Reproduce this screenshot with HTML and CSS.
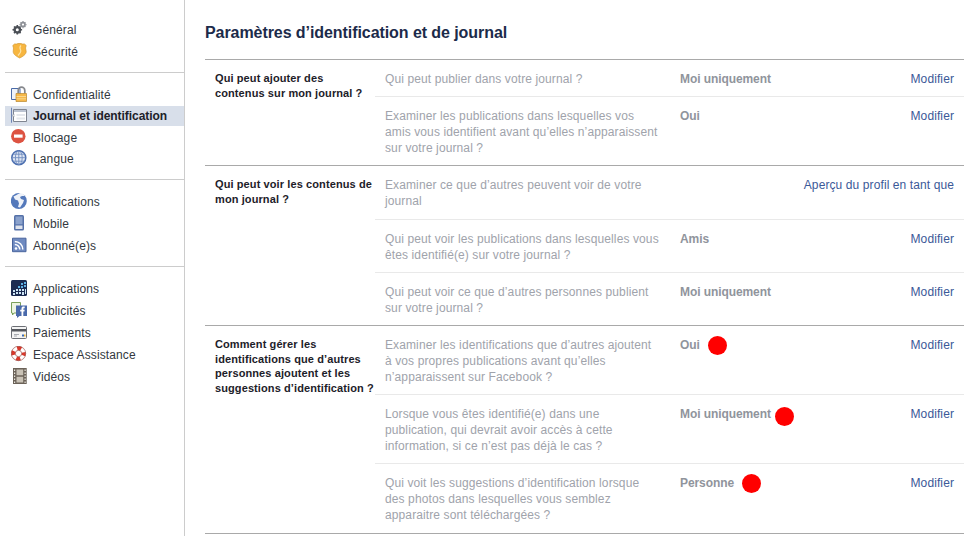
FILE: index.html
```html
<!DOCTYPE html>
<html lang="fr">
<head>
    <meta charset="UTF-8">
    <meta name="viewport" content="width=device-width, initial-scale=1.0">
    <title>Paramètres d’identification et de journal</title>
    <link rel="stylesheet" href="styles.css">
</head>
<body>
    <div class="sidebar">
        <ul class="nav-group first wide">
            <li><svg class="icon" viewBox="0 0 16 18"><circle cx="6.300" cy="8.800" r="2.700" fill="none" stroke="#4b4f56" stroke-width="2.400"/><path d="M6.300 4v1.500M6.300 12v1.500M1.500 8.800H3M9.600 8.800h1.500M3 5.500l1 1M8.600 11.100l1 1M3 12.100l1-1M8.600 6.500l1-1" stroke="#4b4f56" stroke-width="1.600"/><circle cx="12" cy="3.600" r="2" fill="none" stroke="#8d9096" stroke-width="1.700"/><path d="M12 0v1M12 6.200v1M8.500 3.600h1M14.500 3.600h1M9.600 1.200l.7.700M13.700 5.300l.7.700M9.600 6l.7-.7M13.700 1.900l.7-.7" stroke="#8d9096" stroke-width="1.200"/></svg>Général</li>
            <li><svg class="icon" viewBox="0 0 16 18"><path d="M3.500 1h2.300L7 .5h3l1.200.5h2.300l1.700 1.500-.7 2.500.7 3.500c0 3-3.500 5-6.500 6.500-3-1.500-6.500-3.500-6.500-6.500L2.500 5l-.7-2.500z" fill="#f7b640" stroke="#d39a35" stroke-width=".7"/><path d="M10 2.500C7.500 4.500 9.800 6.500 9.800 8S8.500 11 7 12.500" fill="none" stroke="#fde3a5" stroke-width="1.200"/></svg>Sécurité</li>
        </ul>
        <ul class="nav-group">
            <li><svg class="icon" viewBox="0 0 16 18"><path d="M.5 2.500h8.500v11H.5z" fill="#eef2f9" stroke="#4a6ba8"/><path d="M7.200 7.500V4.500a3.300 3.300 0 0 1 6.600 0v3" fill="none" stroke="#85878c" stroke-width="1.700"/><path d="M5 7.500h10.500v8H5z" fill="#f6b84a" stroke="#b8862e" stroke-width=".7"/><path d="M5.500 10.500h9.500M5.500 12.800h9.500" stroke="#fbd98e"/></svg>Confidentialité</li>
            <li class="active"><svg class="icon" viewBox="0 0 16 18"><path d="M.5.700v15" stroke="#6d84b4"/><path d="M2.500 2.500h13v12h-13z" fill="#fff" stroke="#7f8591"/><path d="M3 3h12v2H3z" fill="#bcc4d2"/><path d="M5.500 7h8.500v2H5.500zM5.500 10.500h8.500v2H5.500z" fill="#e4e7ec"/><path d="M3 7 1 8.500 3 10z" fill="#fff" stroke="#7f8591" stroke-width=".5"/></svg>Journal et identification</li>
            <li><svg class="icon" viewBox="0 0 16 18"><circle cx="7.300" cy="7.200" r="7.200" fill="#dd5342"/><path d="M3 5.500h8.600v3.200H3z" fill="#fff"/></svg>Blocage</li>
            <li><svg class="icon" viewBox="0 0 16 18"><circle cx="7.800" cy="7.700" r="7" fill="#dfe6f3" stroke="#4c6fb0" stroke-width="1.500"/><path d="M7.800 1v13.500M1 7.700h13.500M2 4.200h11.500M2 11.200h11.500" stroke="#6f8cc0" stroke-width=".9"/><ellipse cx="7.800" cy="7.700" rx="3.400" ry="6.800" fill="none" stroke="#6f8cc0" stroke-width=".9"/></svg>Langue</li>
        </ul>
        <ul class="nav-group wide">
            <li><svg class="icon" viewBox="0 0 16 18"><circle cx="7.800" cy="8" r="8" fill="#5479bb"/><path d="M8 .5 5.500 2 2.500 3.500l1.500 3 3 1 1 3-1 3.500 2 .5 3-4.500 1-3-3-1-1-2 2-1 3 0-3-3.500z" fill="#fff" opacity=".9"/></svg>Notifications</li>
            <li><svg class="icon" viewBox="0 0 16 18"><rect x="3" y="0" width="10" height="15.500" rx="1.500" fill="#5571a8"/><path d="M4.500 1.500h7v7.800h-7z" fill="#8ba2cc"/><path d="M4.500 10.500h7v3.500h-7z" fill="#dfe3ec"/></svg>Mobile</li>
            <li><svg class="icon" viewBox="0 0 16 18"><path d="M1.500 1.200h13.500v13.500H1.500z" fill="#6f8ac0" stroke="#4a659e"/><circle cx="5" cy="11.500" r="1.300" fill="#fff"/><path d="M3.800 7.500a5 5 0 0 1 5 5M3.800 4.500a8 8 0 0 1 8 8" fill="none" stroke="#fff" stroke-width="1.500"/></svg>Abonné(e)s</li>
        </ul>
        <ul class="nav-group wide">
            <li><svg class="icon" viewBox="0 0 16 18"><rect width="16" height="16" rx="1.500" fill="#1c2c52"/><path d="M10 3h2v2h-2zM13 2h2v2h-2zM7 6h2v2H7zM10 6h2v2h-2zM13 5h2v2h-2z" fill="#5fb0e3"/><path d="M2 10h2v2H2zM5 9h2v2H5zM8 9h2v2H8zM11 9h2v2h-2zM2 13h2v2H2zM5 12h2v2H5zM8 12h2v2H8zM11 12h2v3h-2zM14 9h1v5h-1z" fill="#cfe6f6"/></svg>Applications</li>
            <li><svg class="icon" viewBox="0 0 16 18"><path d="M.5.500h9v10.500H3L1.500 13v-2H.5z" fill="#eef5e2" stroke="#7aa05a"/><path d="M5 3.500h11v10.500H8.500L6 16v-2H5z" fill="#4a6aab"/><path d="M10.500 14V9.500H9.200V7.700h1.300V6.500c0-1.400.9-2 2-2h1.200v1.800h-.8c-.4 0-.6.200-.6.600v.8h1.400l-.3 1.800h-1.100V14z" fill="#fff"/></svg>Publicités</li>
            <li><svg class="icon" viewBox="0 0 16 18"><rect x=".5" y="2.500" width="15" height="12" rx="1" fill="#f4f4f4" stroke="#6c6f75"/><path d="M1 5h14v2.500H1z" fill="#55585e"/><path d="M3 10.500h5M3 12h3" stroke="#a9acb2"/><path d="M11 10.500h2v2h-2z" fill="#3b6bb5"/><path d="M13 10.500h1.500v2H13z" fill="#f0b93a"/></svg>Paiements</li>
            <li><svg class="icon" viewBox="0 0 16 18"><circle cx="7.500" cy="7.500" r="5.200" fill="none" stroke="#fff" stroke-width="4"/><circle cx="7.500" cy="7.500" r="5.200" fill="none" stroke="#d8382b" stroke-width="4" stroke-dasharray="4.080 4.090" stroke-dashoffset="2"/><circle cx="7.500" cy="7.500" r="7.200" fill="none" stroke="#8c3a34" stroke-width=".6"/><circle cx="7.500" cy="7.500" r="3.200" fill="none" stroke="#8c3a34" stroke-width=".6"/></svg>Espace Assistance</li>
            <li><svg class="icon" viewBox="0 0 16 18"><path d="M2 0h13.700v16H2z" fill="#6b6258"/><path d="M5.500 1.500h6.700v5.700H5.500zM5.500 8.800h6.700v5.700H5.500z" fill="#c9c2b6"/><path d="M3 1.500h1.200v1.500H3zM3 4.500h1.200v1.500H3zM3 7.500h1.200v1.500H3zM3 10.500h1.200v1.500H3zM3 13.500h1.200v1.500H3zM13.500 1.500h1.200v1.500h-1.200zM13.500 4.500h1.200v1.500h-1.200zM13.500 7.500h1.200v1.500h-1.200zM13.500 10.500h1.200v1.500h-1.200zM13.500 13.500h1.200v1.500h-1.200z" fill="#e8e4dc"/></svg>Vidéos</li>
        </ul>
    </div>

    <div class="content">
        <h1>Paramètres d’identification et de journal</h1>

        <div class="settings">
            <div class="section">
                <div class="section-title">Qui peut ajouter des contenus sur mon journal ?</div>
                <div class="rows">
                    <div class="row">
                        <div class="label">Qui peut publier dans votre journal ?</div>
                        <div class="value">Moi uniquement</div>
                        <a class="edit" href="#">Modifier</a>
                    </div>
                    <div class="row">
                        <div class="label">Examiner les publications dans lesquelles vos amis vous identifient avant qu’elles n’apparaissent sur votre journal ?</div>
                        <div class="value">Oui</div>
                        <a class="edit" href="#">Modifier</a>
                    </div>
                </div>
            </div>

            <div class="section">
                <div class="section-title">Qui peut voir les contenus de mon journal ?</div>
                <div class="rows">
                    <div class="row tall">
                        <div class="label">Examiner ce que d’autres peuvent voir de votre journal</div>
                        <a class="edit" href="#">Aperçu du profil en tant que</a>
                    </div>
                    <div class="row">
                        <div class="label">Qui peut voir les publications dans lesquelles vous êtes identifié(e) sur votre journal ?</div>
                        <div class="value">Amis</div>
                        <a class="edit" href="#">Modifier</a>
                    </div>
                    <div class="row">
                        <div class="label">Qui peut voir ce que d’autres personnes publient sur votre journal ?</div>
                        <div class="value">Moi uniquement</div>
                        <a class="edit" href="#">Modifier</a>
                    </div>
                </div>
            </div>

            <div class="section">
                <div class="section-title">Comment gérer les identifications que d’autres personnes ajoutent et les suggestions d’identification ?</div>
                <div class="rows">
                    <div class="row">
                        <div class="label">Examiner les identifications que d’autres ajoutent à vos propres publications avant qu’elles n’apparaissent sur Facebook ?</div>
                        <div class="value">Oui<span class="dot dot-oui"></span></div>
                        <a class="edit" href="#">Modifier</a>
                    </div>
                    <div class="row">
                        <div class="label">Lorsque vous êtes identifié(e) dans une publication, qui devrait avoir accès à cette information, si ce n’est pas déjà le cas ?</div>
                        <div class="value">Moi uniquement<span class="dot dot-moi"></span></div>
                        <a class="edit" href="#">Modifier</a>
                    </div>
                    <div class="row tall">
                        <div class="label">Qui voit les suggestions d’identification lorsque des photos dans lesquelles vous semblez apparaitre sont téléchargées ?</div>
                        <div class="value">Personne<span class="dot dot-personne"></span></div>
                        <a class="edit" href="#">Modifier</a>
                    </div>
                </div>
            </div>
        </div>
    </div>
</body>
</html>
```
FILE: styles.css
```css
html, body {
    height: 100%;
}
body {
    font-family: "Liberation Sans", Arial, sans-serif;
    font-size: 12px;
    margin: 0;
    padding: 0;
    display: flex;
    background-color: #fff;
    color: #1d2129;
    overflow: hidden;
}
.sidebar {
    width: 179px;
    border-right: 1px solid #ccc;
    padding: 19px 0 0 5px;
    flex: none;
}
.nav-group {
    list-style: none;
    margin: 0;
    padding: 11px 0 9px;
    border-top: 1px solid #ccc;
}
.nav-group.first {
    border-top: none;
    padding: 0 0 9px;
}
.nav-group li {
    height: 21.5px;
    display: flex;
    align-items: center;
    padding-left: 6px;
    box-sizing: border-box;
    color: #333840;
    letter-spacing: 0.12px;
}
.nav-group.wide li {
    height: 22px;
}
.nav-group li.active {
    font-weight: bold;
    letter-spacing: -0.05px;
    background-color: #d8dfea;
    color: #1d2129;
    height: 20px;
    margin: 0 0 1.5px;
    padding-top: 1px;
}
.icon {
    width: 16px;
    height: 18px;
    margin-right: 6px;
    flex: none;
}
.content {
    flex: 1;
    padding: 0 9px 0 20px;
}
h1 {
    font-size: 16px;
    line-height: 20px;
    font-weight: bold;
    letter-spacing: -0.07px;
    color: #1c2b4a;
    margin: 23px 0 16px;
}
.settings {
    border-top: 1px solid #a9a9a9;
}
.section {
    display: flex;
    border-bottom: 1px solid #a9a9a9;
}
.section-title {
    width: 160px;
    padding: 11px 0 0 10px;
    font-size: 11px;
    line-height: 14.67px;
    font-weight: bold;
    letter-spacing: 0.1px;
    color: #1d2129;
    flex: none;
}
.rows {
    flex: 1;
}
.row {
    display: flex;
    padding: 11px 10px 9px;
    line-height: 16px;
    border-top: 1px solid #e9e9e9;
}
.row:first-child {
    border-top: none;
}
.row.tall {
    padding-bottom: 10px;
}
.label {
    width: 276px;
    margin-right: 19px;
    color: #a0a3ab;
    letter-spacing: 0.11px;
    flex: none;
}
.value {
    position: relative;
    font-weight: bold;
    letter-spacing: -0.08px;
    color: #90949c;
}
.edit {
    margin-left: auto;
    color: #3b5998;
    text-decoration: none;
    letter-spacing: 0.1px;
}
.dot {
    position: absolute;
    width: 19px;
    height: 19px;
    border-radius: 50%;
    background-color: #f00;
}
.dot-oui {
    top: -1px;
    left: 28px;
}
.dot-moi {
    top: 1px;
    left: 95px;
}
.dot-personne {
    top: -1px;
    left: 62px;
}
```
